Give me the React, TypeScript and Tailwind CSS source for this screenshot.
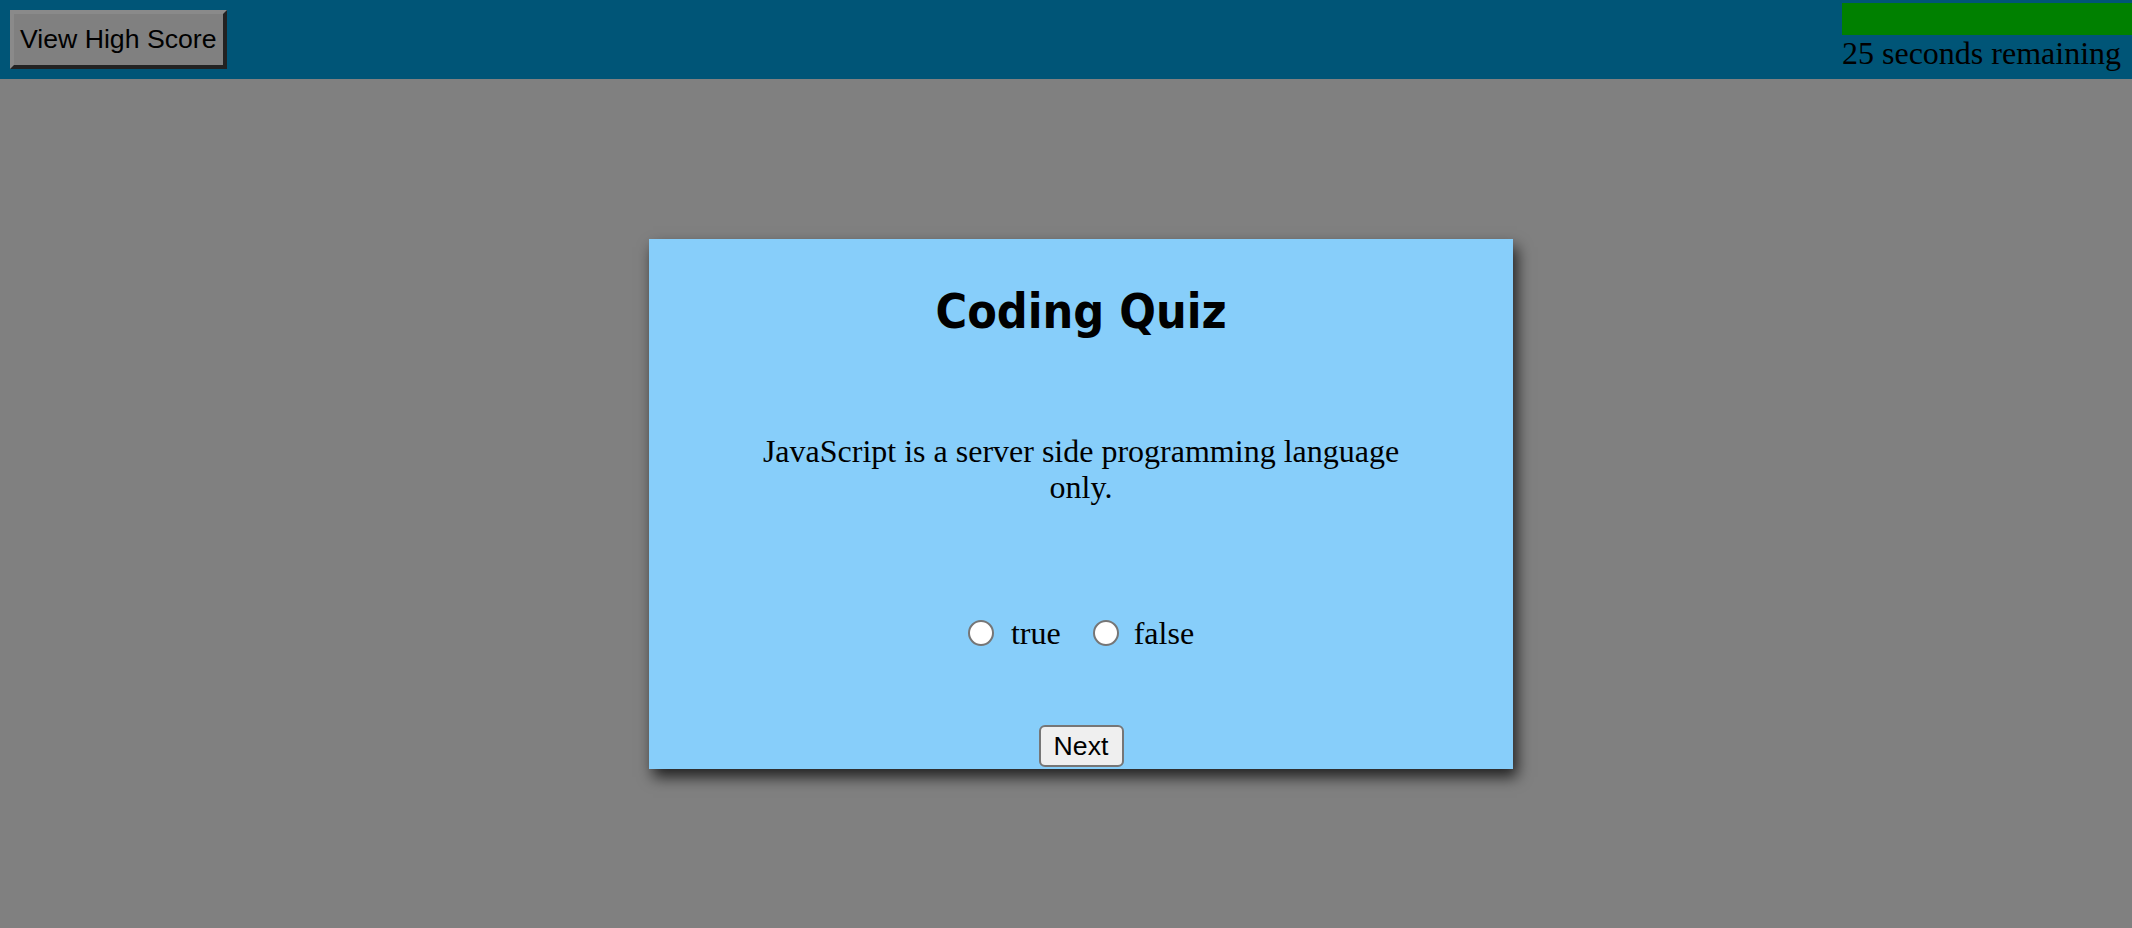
import { useState } from "react";

const answers = ["true", "false"];

export default function App() {
  const [picked, setPicked] = useState("");

  return (
    <div className="min-h-screen bg-[#808080] font-['Liberation_Serif',serif] text-black">
      <header className="flex h-[79px] items-start justify-between bg-[#005577]">
        <button className="m-[10px] border-4 border-t-[#8a8a8a] border-l-[#8a8a8a] border-r-[#222222] border-b-[#222222] bg-[#808080] px-[6px] py-[10px] font-['Liberation_Sans',sans-serif] text-[26.67px] leading-[31px]">
          View High Score
        </button>
        <div className="flex w-[290px] flex-col pt-[3px]">
          <div className="h-[32px] bg-[#008000]"></div>
          <div className="text-[32px] leading-[36px] whitespace-nowrap">
            25 seconds remaining
          </div>
        </div>
      </header>

      <main className="pt-[160px]">
        <div className="ml-[649px] flex h-[530px] w-[864px] flex-col items-center bg-[#87cefa] shadow-[4px_8px_14px_rgba(0,0,0,0.75)]">
          <h1 className="mt-[44px] font-['DejaVu_Sans',sans-serif] text-[48px] font-bold font-stretch-condensed leading-[56px]">
            Coding Quiz
          </h1>

          <p className="mt-[94px] w-[680px] text-center text-[32px] leading-[36px]">
            JavaScript is a server side programming language only.
          </p>

          <div className="mt-[110px] flex h-[36px] items-center text-[32px] leading-[36px]">
            {answers.map((a, i) => (
              <label key={a} className={`flex items-center ${i > 0 ? "ml-[32px]" : ""}`}>
                <input
                  type="radio"
                  name="answer"
                  value={a}
                  checked={picked === a}
                  onChange={() => setPicked(a)}
                  className="m-0 h-[26px] w-[26px] appearance-none rounded-full border-2 border-[#767676] bg-white checked:border-[8px] checked:border-[#0075ff]"
                />
                <span className={i > 0 ? "ml-[15px]" : "ml-[17px]"}>{a}</span>
              </label>
            ))}
          </div>

          <button className="mt-[74px] flex h-[42px] w-[85px] items-center justify-center rounded-[6px] border-2 border-[#767676] bg-[#efefef] font-['Liberation_Sans',sans-serif] text-[26.67px]">
            Next
          </button>
        </div>
      </main>
    </div>
  );
}
